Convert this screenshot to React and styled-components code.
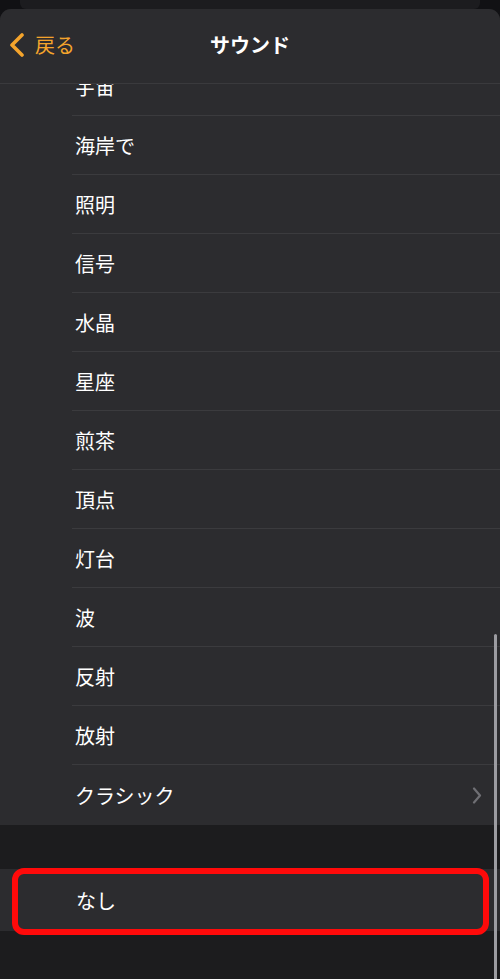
import styled, { createGlobalStyle } from 'styled-components'

const GlobalStyle = createGlobalStyle`
  html, body {
    margin: 0;
    padding: 0;
    background: #111114;
  }
  * {
    box-sizing: border-box;
  }
`

const Screen = styled.div`
  width: 500px;
  height: 979px;
  overflow: hidden;
  display: flex;
  flex-direction: column;
  background: #111114;
  font-family: 'Noto Sans CJK JP', 'Noto Sans', sans-serif;
  color: #fff;
`

const BackCard = styled.div`
  height: 9px;
  flex-shrink: 0;
  margin: 0 20px;
  background: #1c1c1f;
  border-radius: 0 0 6px 6px;
`

const Sheet = styled.div`
  flex: 1;
  display: flex;
  flex-direction: column;
  min-height: 0;
  background: #1c1c1e;
  border-radius: 11px 11px 0 0;
  overflow: hidden;
`

const NavBar = styled.header`
  height: 75px;
  flex-shrink: 0;
  display: grid;
  grid-template-columns: 1fr auto 1fr;
  align-items: center;
  background: #2c2c2f;
  border-bottom: 1px solid #3a3a3d;
  padding: 0 9px 2px;
`

const BackButton = styled.button`
  justify-self: start;
  display: flex;
  align-items: center;
  gap: 10px;
  background: none;
  border: 0;
  padding: 0;
  color: #f4a42c;
  font: inherit;
  font-size: 20px;
  line-height: 1;
`

const Title = styled.h1`
  margin: 0;
  font-size: 20px;
  font-weight: 700;
  line-height: 1;
`

const Viewport = styled.div`
  position: relative;
  flex: 1;
  overflow: hidden;
`

const Group = styled.ul`
  list-style: none;
  margin: ${(p) => p.$offset || 0}px 0 0;
  padding: 0;
  background: #2c2c2f;
`

const Row = styled.li`
  height: ${(p) => (p.$last ? 60 : 59)}px;
  margin-left: 72px;
  padding: 0 18px 0 3px;
  display: flex;
  align-items: center;
  justify-content: space-between;
  font-size: 20px;
  border-bottom: ${(p) => (p.$last ? 'none' : '1px solid #3b3b3e')};
`

const Spacer = styled.div`
  height: 44px;
`

const SingleRow = styled.div`
  position: relative;
  height: 62px;
  background: #2c2c2f;
  padding-left: 76px;
  display: flex;
  align-items: center;
  font-size: 20px;
`

const Highlight = styled.div`
  position: absolute;
  top: -1px;
  bottom: -4px;
  left: 12px;
  right: 11px;
  border: 6px solid #ff0a0a;
  border-radius: 12px;
  pointer-events: none;
`

const ScrollBar = styled.div`
  position: absolute;
  right: 3px;
  top: 550px;
  bottom: -4px;
  width: 3px;
  border-radius: 2px;
  background: #9c9ca1;
`

const tones = [
  '宇宙',
  '海岸で',
  '照明',
  '信号',
  '水晶',
  '星座',
  '煎茶',
  '頂点',
  '灯台',
  '波',
  '反射',
  '放射',
]

function BackChevron() {
  return (
    <svg width="16" height="24" viewBox="0 0 16 24" fill="none">
      <polyline
        points="13,2 3,12 13,22"
        stroke="#f4a42c"
        strokeWidth="3.6"
        strokeLinecap="round"
        strokeLinejoin="round"
      />
    </svg>
  )
}

function Disclosure() {
  return (
    <svg width="10" height="17" viewBox="0 0 10 17" fill="none">
      <polyline
        points="2,1.5 8,8.5 2,15.5"
        stroke="#6f6f74"
        strokeWidth="2.2"
        strokeLinecap="round"
        strokeLinejoin="round"
      />
    </svg>
  )
}

export default function App() {
  return (
    <>
      <GlobalStyle />
      <Screen>
        <BackCard />
        <Sheet>
          <NavBar>
            <BackButton>
              <BackChevron />
              戻る
            </BackButton>
            <Title>サウンド</Title>
            <span />
          </NavBar>
          <Viewport>
            <Group $offset={-27}>
              {tones.map((name) => (
                <Row key={name}>{name}</Row>
              ))}
              <Row $last>
                クラシック
                <Disclosure />
              </Row>
            </Group>
            <Spacer />
            <SingleRow>
              なし
              <Highlight />
            </SingleRow>
            <ScrollBar />
          </Viewport>
        </Sheet>
      </Screen>
    </>
  )
}
